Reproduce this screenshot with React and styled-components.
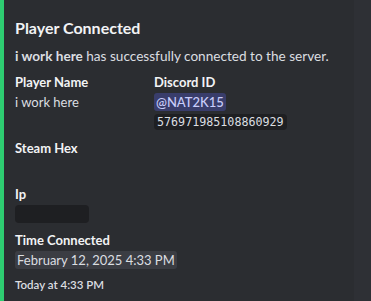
import React from "react";
import styled, { createGlobalStyle } from "styled-components";

const Global = createGlobalStyle`
  html, body { margin: 0; padding: 0; background: #2e3035; }
  body { font-family: Lato, "Noto Sans", sans-serif; }
`;

const Page = styled.div`
  width: 371px;
  height: 301px;
  overflow: hidden;
  background: #2e3035;
`;

const Embed = styled.article`
  width: 354px;
  box-sizing: border-box;
  background: #2b2d31;
  border-left: 4px solid #2ecc71;
  padding: 17px 16px 16px 11px;
  min-height: 301px;
`;

const Title = styled.div`
  color: #f2f3f5;
  font-size: 16px;
  font-weight: 700;
  line-height: 22px;
`;

const Description = styled.div`
  margin-top: 8px;
  color: #dbdee1;
  font-size: 13.6px;
  line-height: 18px;
  white-space: nowrap;
  strong { font-weight: 700; color: #dbdee1; }
`;

const Fields = styled.div`
  margin-top: 8px;
  display: grid;
  grid-template-columns: 139px 1fr;
  row-gap: 8px;
`;

const Field = styled.div`
  grid-column: ${(p) => (p.$full ? "1 / -1" : "auto")};
  min-width: 0;
`;

const FieldName = styled.div`
  color: #f2f3f5;
  font-size: 13px;
  font-weight: 700;
  line-height: 18px;
  margin-bottom: 2px;
`;

const FieldValue = styled.div`
  display: flex;
  flex-direction: column;
  align-items: flex-start;
  color: #dbdee1;
  font-size: 13px;
  line-height: 18px;
  min-height: 18px;
`;

const Mention = styled.span`
  background: rgba(88, 101, 242, 0.3);
  color: #c9cdfb;
  border-radius: 3px;
  padding: 0 2px;
  font-weight: 500;
  line-height: 18px;
`;

const Code = styled.code`
  margin: 3px 0 1px;
  background: #1e1f22;
  color: #dbdee1;
  border-radius: 4px;
  padding: 0 3px;
  font-family: "DejaVu Sans Mono", "Liberation Mono", monospace;
  font-size: 11.7px;
  line-height: 16px;
`;

const Spoiler = styled.span`
  width: 74px;
  height: 18px;
  background: #1e1f22;
  border-radius: 4px;
`;

const Timestamp = styled.span`
  background: rgba(78, 80, 88, 0.48);
  border-radius: 3px;
  padding: 0 2px;
  line-height: 18px;
`;

const Footer = styled.div`
  margin-top: 8px;
  color: #dbdee1;
  font-size: 11.5px;
  font-weight: 600;
  line-height: 16px;
`;

export default function App() {
  return (
    <Page>
      <Global />
      <Embed>
        <Title>Player Connected</Title>
        <Description>
          <strong>i work here</strong> has successfully connected to the server.
        </Description>
        <Fields>
          <Field>
            <FieldName>Player Name</FieldName>
            <FieldValue>i work here</FieldValue>
          </Field>
          <Field>
            <FieldName>Discord ID</FieldName>
            <FieldValue>
              <Mention>@NAT2K15</Mention>
              <Code>576971985108860929</Code>
            </FieldValue>
          </Field>
          <Field $full>
            <FieldName>Steam Hex</FieldName>
            <FieldValue />
          </Field>
          <Field $full>
            <FieldName>Ip</FieldName>
            <FieldValue>
              <Spoiler aria-label="hidden" />
            </FieldValue>
          </Field>
          <Field $full>
            <FieldName>Time Connected</FieldName>
            <FieldValue>
              <Timestamp>February 12, 2025 4:33 PM</Timestamp>
            </FieldValue>
          </Field>
        </Fields>
        <Footer>Today at 4:33 PM</Footer>
      </Embed>
    </Page>
  );
}
